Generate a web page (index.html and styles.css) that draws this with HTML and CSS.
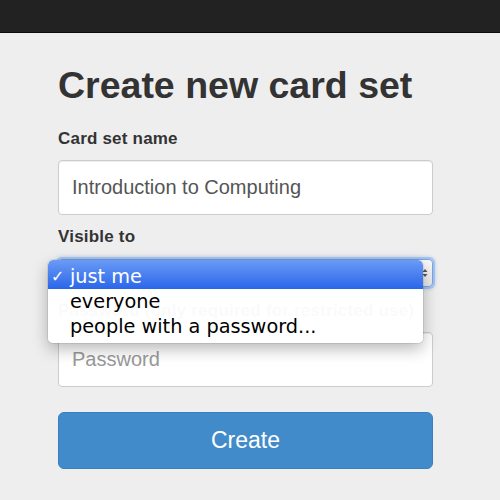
FILE: index.html
```html
<!DOCTYPE html>
<html>
<head>
<meta charset="utf-8">
<link rel="stylesheet" href="styles.css">
</head>
<body>
<div class="topbar"></div>
<main class="page">
  <h1 class="title">Create new card set</h1>
  <form class="form">
    <label class="label">Card set name</label>
    <div class="input filled">Introduction to Computing</div>
    <label class="label gap">Visible to</label>
    <div class="select-wrap">
      <div class="select">
        <svg class="arrows" width="6" height="10" viewBox="0 0 6 10"><path d="M0.5 4 L3 1 L5.5 4 Z M0.5 6 L3 9 L5.5 6 Z" fill="#555"/></svg>
      </div>
      <ul class="menu">
        <li class="opt active"><span class="check">✓</span>just me</li>
        <li class="opt">everyone</li>
        <li class="opt">people with a password...</li>
      </ul>
    </div>
    <label class="label gap2">Password (only required for restricted use)</label>
    <div class="input placeholder">Password</div>
    <button type="button" class="btn">Create</button>
  </form>
</main>
</body>
</html>
```
FILE: styles.css
```css
html, body {
  margin: 0;
  padding: 0;
  background: #eeeeee;
}
body {
  font-family: "Liberation Sans", Arial, sans-serif;
  color: #333;
  width: 500px;
  height: 500px;
  overflow: hidden;
}
.topbar {
  height: 32px;
  background: #222222;
  border-bottom: 1px solid #0b0b0b;
}
.page {
  margin-left: 58px;
  width: 375px;
  padding-top: 30px;
}
.title {
  margin: 0;
  font-size: 37.5px;
  line-height: 44px;
  font-weight: bold;
  color: #333;
}
.form {
  display: flex;
  flex-direction: column;
  margin-top: 22px;
}
.label {
  display: block;
  font-size: 17px;
  letter-spacing: 0.2px;
  line-height: 20px;
  font-weight: bold;
  color: #333;
  margin-bottom: 11px;
}
.label.gap { margin-top: 12px; margin-bottom: 12px; }
.label.gap2 { margin-top: 14px; }
.input {
  box-sizing: border-box;
  height: 55px;
  background: #fff;
  border: 1px solid #cccccc;
  border-radius: 4px;
  box-shadow: inset 0 1px 1px rgba(0,0,0,0.075);
  padding: 0 13px;
  display: flex;
  align-items: center;
  font-size: 20px;
  color: #555;
}
.input.placeholder { color: #999; }
.select-wrap {
  position: relative;
  height: 28px;
}
.select {
  box-sizing: border-box;
  height: 28px;
  border: 1px solid #79a6ea;
  border-radius: 4px;
  background: linear-gradient(#fafafa, #e9e9e9);
  box-shadow: 0 0 0 2px rgba(110, 165, 240, 0.45), 0 0 3px 3px rgba(110, 165, 240, 0.25);
  display: flex;
  align-items: center;
  justify-content: flex-end;
  padding-right: 4px;
}
.arrows { display: block; }
.menu {
  position: absolute;
  left: -10px;
  top: 1px;
  width: 375px;
  margin: 0;
  padding: 0 0 4px 0;
  list-style: none;
  background: rgba(255,255,255,0.975);
  border-radius: 5px;
  box-shadow: 0 0 0 1px rgba(0,0,0,0.08), 0 6px 16px rgba(0,0,0,0.28);
  font-family: "DejaVu Sans", Verdana, sans-serif;
  font-size: 19.3px;
  overflow: hidden;
}
.opt {
  position: relative;
  height: 25px;
  line-height: 25px;
  padding-left: 22px;
  color: #000;
  white-space: nowrap;
}
.opt.active {
  height: 29px;
  line-height: 33px;
  color: #fff;
  background: linear-gradient(#6b9bf5, #2a66e9);
  border-radius: 5px 5px 0 0;
}
.check {
  position: absolute;
  left: 3px;
  top: 0;
  font-size: 16px;
  font-weight: bold;
}
.btn {
  margin-top: 25px;
  height: 57px;
  border: 1px solid #3a7fc0;
  border-radius: 6px;
  background: #428bca;
  color: #fff;
  font-family: "Liberation Sans", Arial, sans-serif;
  font-size: 23px;
  padding: 0;
}
```
